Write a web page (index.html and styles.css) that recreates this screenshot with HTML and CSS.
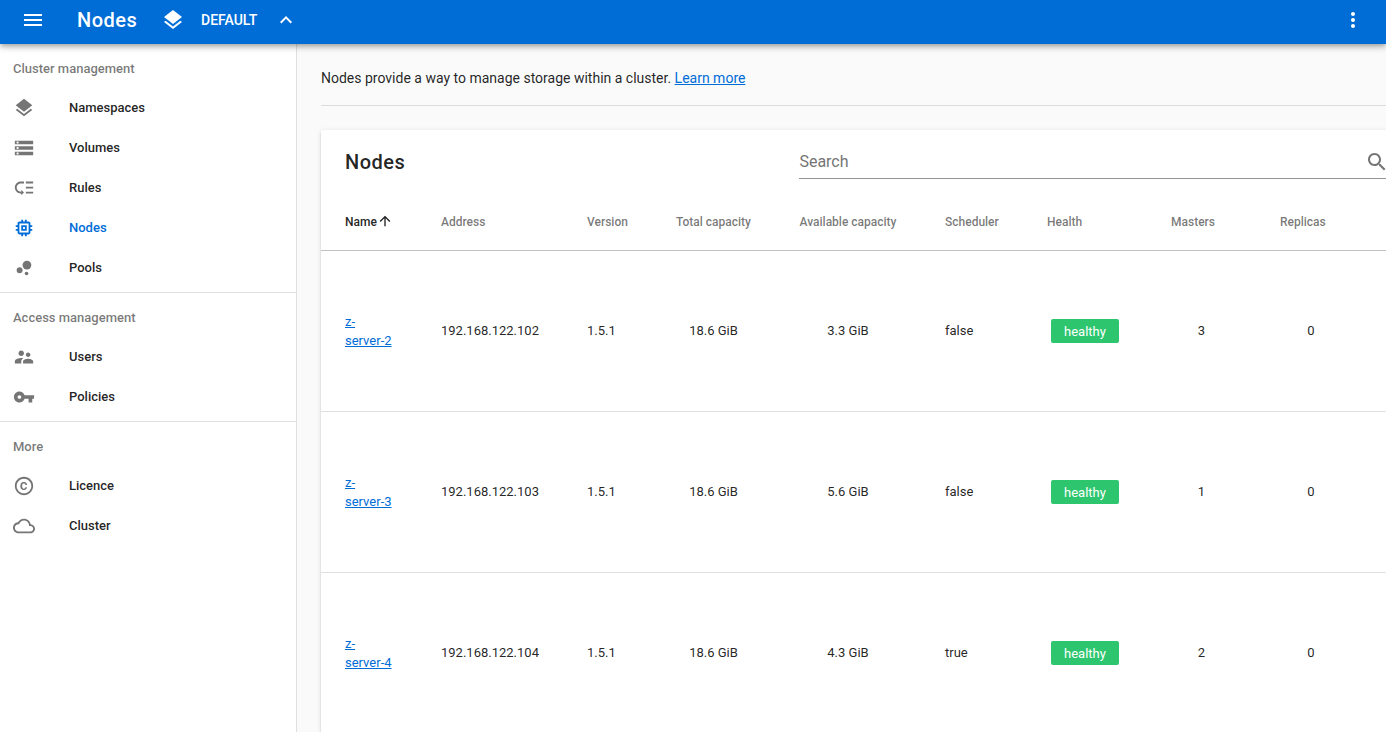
FILE: index.html
```html
<!DOCTYPE html>
<html lang="en">
<head>
<meta charset="utf-8">
<title>Nodes</title>
<link rel="stylesheet" href="styles.css">
</head>
<body>
<header class="toolbar">
  <svg class="icon menu" viewBox="0 0 24 24"><path d="M3 18h18v-2H3v2zm0-5h18v-2H3v2zm0-7v2h18V6H3z"/></svg>
  <h1 class="toolbar-title">Nodes</h1>
  <svg class="icon" viewBox="0 0 24 24"><path d="M11.99 18.54l-7.37-5.73L3 14.07l9 7 9-7-1.63-1.27-7.38 5.74zM12 16l7.36-5.73L21 9l-9-7-9 7 1.63 1.27L12 16z"/></svg>
  <span class="namespace">DEFAULT</span>
  <svg class="icon" viewBox="0 0 24 24"><path d="M12 8l-6 6 1.41 1.41L12 10.83l4.59 4.58L18 14z"/></svg>
  <svg class="icon more" viewBox="0 0 24 24"><path d="M12 8c1.1 0 2-.9 2-2s-.9-2-2-2-2 .9-2 2 .9 2 2 2zm0 2c-1.1 0-2 .9-2 2s.9 2 2 2 2-.9 2-2-.9-2-2-2zm0 6c-1.1 0-2 .9-2 2s.9 2 2 2 2-.9 2-2-.9-2-2-2z"/></svg>
</header>
<div class="layout">
  <nav class="sidebar">
    <section class="group">
      <h2 class="subheader">Cluster management</h2>
      <a class="item"><svg class="nav-icon" viewBox="0 0 24 24"><path d="M11.99 18.54l-7.37-5.73L3 14.07l9 7 9-7-1.63-1.27-7.38 5.74zM12 16l7.36-5.73L21 9l-9-7-9 7 1.63 1.27L12 16z"/></svg><span class="label">Namespaces</span></a>
      <a class="item"><svg class="nav-icon" viewBox="0 0 24 24"><path d="M2 20h20v-4H2v4zm2-3h2v2H4v-2zM2 4v4h20V4H2zm4 3H4V5h2v2zm-4 7h20v-4H2v4zm2-3h2v2H4v-2z"/></svg><span class="label">Volumes</span></a>
      <a class="item"><svg class="nav-icon" viewBox="0 0 24 24"><path d="M14 5h8v2h-8zm0 5.5h8v2h-8zm0 5.5h8v2h-8zM2 11.5C2 15.08 4.92 18 8.5 18H9v2l3-3-3-3v2h-.5C6.02 16 4 13.98 4 11.5S6.02 7 8.5 7H12V5H8.5C4.92 5 2 7.92 2 11.5z"/></svg><span class="label">Rules</span></a>
      <a class="item active"><svg class="nav-icon" viewBox="0 0 24 24"><path d="M15 9H9v6h6V9zm-2 4h-2v-2h2v2zm8-2V9h-2V7c0-1.1-.9-2-2-2h-2V3h-2v2h-2V3H9v2H7c-1.1 0-2 .9-2 2v2H3v2h2v2H3v2h2v2c0 1.1.9 2 2 2h2v2h2v-2h2v2h2v-2h2c1.1 0 2-.9 2-2v-2h2v-2h-2v-2h2zm-4 6H7V7h10v10z"/></svg><span class="label">Nodes</span></a>
      <a class="item"><svg class="nav-icon" viewBox="0 0 24 24"><circle cx="7.2" cy="14.4" r="3.2"/><circle cx="14.8" cy="18" r="2"/><circle cx="15.2" cy="8.8" r="4.8"/></svg><span class="label">Pools</span></a>
    </section>
    <section class="group">
      <h2 class="subheader">Access management</h2>
      <a class="item"><svg class="nav-icon" viewBox="0 0 24 24"><path d="M16.5 12c1.38 0 2.49-1.12 2.49-2.5S17.88 7 16.5 7C15.12 7 14 8.12 14 9.5s1.12 2.5 2.5 2.5zM9 11c1.66 0 2.99-1.34 2.99-3S10.66 5 9 5C7.34 5 6 6.34 6 8s1.34 3 3 3zm7.5 3c-1.83 0-5.5.92-5.5 2.75V19h11v-2.25c0-1.83-3.67-2.75-5.5-2.75zM9 13c-2.33 0-7 1.17-7 3.5V19h7v-2.25c0-.85.33-2.34 2.37-3.47C10.5 13.1 9.66 13 9 13z"/></svg><span class="label">Users</span></a>
      <a class="item"><svg class="nav-icon" viewBox="0 0 24 24"><path d="M12.65 10C11.83 7.67 9.61 6 7 6c-3.31 0-6 2.69-6 6s2.69 6 6 6c2.61 0 4.83-1.67 5.65-4H17v4h4v-4h2v-4H12.65zM7 14c-1.1 0-2-.9-2-2s.9-2 2-2 2 .9 2 2-.9 2-2 2z"/></svg><span class="label">Policies</span></a>
    </section>
    <section class="group">
      <h2 class="subheader">More</h2>
      <a class="item"><svg class="nav-icon" viewBox="0 0 24 24"><path d="M10.08 10.86c.05-.33.16-.62.3-.87s.34-.46.59-.62c.24-.15.54-.22.91-.23.23.01.44.05.63.13.2.09.38.21.52.36s.25.33.34.53.13.42.14.64h1.79c-.02-.47-.11-.9-.28-1.29s-.4-.73-.7-1.01-.66-.5-1.08-.66-.88-.23-1.39-.23c-.65 0-1.22.11-1.7.34s-.88.53-1.2.92-.56.84-.71 1.36S8 11.29 8 11.87v.27c0 .58.08 1.12.23 1.64s.39.97.71 1.35.72.69 1.2.91 1.05.34 1.7.34c.47 0 .91-.08 1.32-.23s.77-.36 1.08-.63.56-.58.74-.94.29-.74.3-1.15h-1.79c-.01.21-.06.4-.15.58s-.21.33-.36.46-.32.23-.52.3c-.19.07-.39.09-.6.1-.36-.01-.66-.08-.89-.23-.25-.16-.45-.37-.59-.62s-.25-.55-.3-.88-.08-.67-.08-1v-.27c0-.35.03-.68.08-1.01zM12 2C6.48 2 2 6.48 2 12s4.48 10 10 10 10-4.48 10-10S17.52 2 12 2zm0 18c-4.41 0-8-3.59-8-8s3.59-8 8-8 8 3.59 8 8-3.59 8-8 8z"/></svg><span class="label">Licence</span></a>
      <a class="item"><svg class="nav-icon" viewBox="0 0 24 24"><path d="M19.35 10.04C18.67 6.59 15.64 4 12 4 9.11 4 6.6 5.64 5.35 8.04 2.34 8.36 0 10.91 0 14c0 3.31 2.69 6 6 6h13c2.76 0 5-2.24 5-5 0-2.64-2.05-4.78-4.65-4.96zM19 18H6c-2.21 0-4-1.79-4-4s1.79-4 4-4h.71C7.37 7.69 9.48 6 12 6c3.04 0 5.5 2.46 5.5 5.5v.5H19c1.66 0 3 1.34 3 3s-1.34 3-3 3z"/></svg><span class="label">Cluster</span></a>
    </section>
  </nav>
  <main class="content">
    <p class="intro">Nodes provide a way to manage storage within a cluster. <a class="link">Learn more</a></p>
    <div class="card">
      <div class="card-head">
        <h2 class="card-title">Nodes</h2>
        <div class="search"><span class="placeholder">Search</span><svg class="icon" viewBox="0 0 24 24"><path d="M15.5 14h-.79l-.28-.27C15.41 12.59 16 11.11 16 9.5 16 5.91 13.09 3 9.5 3S3 5.91 3 9.5 5.91 16 9.5 16c1.61 0 3.09-.59 4.23-1.57l.27.28v.79l5 4.99L20.49 19l-4.99-5zm-6 0C7.01 14 5 11.99 5 9.5S7.01 5 9.5 5 14 7.01 14 9.5 11.99 14 9.5 14z"/></svg></div>
      </div>
      <table class="nodes">
        <colgroup><col class="c-name"><col class="c-address"><col class="c-version"><col class="c-total"><col class="c-available"><col class="c-scheduler"><col class="c-health"><col class="c-masters"><col class="c-replicas"><col></colgroup>
        <thead>
          <tr><th class="sorted">Name<svg class="sort" viewBox="0 0 24 24"><path d="M4 12l1.41 1.41L11 7.83V20h2V7.83l5.58 5.59L20 12l-8-8-8 8z"/></svg></th><th>Address</th><th>Version</th><th class="center">Total capacity</th><th class="center">Available capacity</th><th>Scheduler</th><th>Health</th><th>Masters</th><th>Replicas</th><th></th></tr>
        </thead>
        <tbody>
          <tr><td class="name"><a class="link">z-<br>server-2</a></td><td>192.168.122.102</td><td>1.5.1</td><td class="center">18.6 GiB</td><td class="center">3.3 GiB</td><td>false</td><td class="health"><span class="chip">healthy</span></td><td class="center">3</td><td class="center">0</td><td></td></tr>
          <tr><td class="name"><a class="link">z-<br>server-3</a></td><td>192.168.122.103</td><td>1.5.1</td><td class="center">18.6 GiB</td><td class="center">5.6 GiB</td><td>false</td><td class="health"><span class="chip">healthy</span></td><td class="center">1</td><td class="center">0</td><td></td></tr>
          <tr><td class="name"><a class="link">z-<br>server-4</a></td><td>192.168.122.104</td><td>1.5.1</td><td class="center">18.6 GiB</td><td class="center">4.3 GiB</td><td>true</td><td class="health"><span class="chip">healthy</span></td><td class="center">2</td><td class="center">0</td><td></td></tr>
        </tbody>
      </table>
    </div>
  </main>
</div>
</body>
</html>
```

FILE: styles.css
```css
* { box-sizing: border-box; }

body {
  margin: 0;
  height: 732px;
  overflow: hidden;
  display: flex;
  flex-direction: column;
  background: #fafafa;
  color: rgba(0, 0, 0, .87);
  font-family: Roboto, "Liberation Sans", sans-serif;
}

h1, h2, p { margin: 0; }
svg { fill: currentColor; flex: none; }
.icon { width: 24px; height: 24px; }

.toolbar {
  position: relative;
  z-index: 2;
  flex: none;
  height: 44px;
  padding: 0 21px 4px;
  display: flex;
  align-items: center;
  background: #006dd7;
  color: #fff;
  box-shadow: 0 2px 4px -1px rgba(0, 0, 0, .2), 0 4px 5px rgba(0, 0, 0, .14), 0 1px 10px rgba(0, 0, 0, .12);
}
.toolbar-title {
  width: 84px;
  margin-left: 32px;
  font-size: 20px;
  font-weight: 500;
  letter-spacing: .5px;
}
.namespace {
  width: 57px;
  margin: 0 15.5px 0 16px;
  font-size: 14px;
  font-weight: 500;
}
.more { margin-left: auto; }

.layout { flex: 1; min-height: 0; display: flex; overflow: hidden; }

.sidebar {
  flex: none;
  width: 297px;
  background: #fff;
  border-right: 1px solid #dfdfdf;
  font-size: 13px;
  font-weight: 500;
}
.group { padding: 4px 0; }
.group + .group { border-top: 1px solid #e0e0e0; }
.subheader {
  height: 40px;
  padding-left: 13px;
  font-size: 13px;
  font-weight: 500;
  line-height: 41px;
  color: rgba(0, 0, 0, .54);
}
.item {
  height: 40px;
  padding-left: 13px;
  display: flex;
  align-items: center;
  gap: 34px;
}
.label { padding-bottom: 2px; }
.nav-icon { width: 22px; height: 22px; color: #757575; }
.active, .active .nav-icon { color: #006dd7; }

.content { flex: none; width: 1120px; padding-left: 24px; }
.intro {
  height: 62px;
  padding-top: 24px;
  border-bottom: 1px solid #dcdcdc;
  font-size: 14px;
  line-height: 21px;
}
.link { color: #006dd7; text-decoration: underline; }

.card {
  margin-top: 24px;
  background: #fff;
  border-radius: 2px;
  box-shadow: 0 3px 1px -2px rgba(0, 0, 0, .2), 0 2px 2px rgba(0, 0, 0, .14), 0 1px 5px rgba(0, 0, 0, .12);
}
.card-head { height: 64px; display: flex; padding-left: 24px; }
.card-title {
  width: 454px;
  font-size: 20px;
  font-weight: 500;
  letter-spacing: .5px;
  line-height: 64px;
}
.search {
  width: 590px;
  height: 33px;
  margin-top: 16px;
  display: flex;
  justify-content: space-between;
  align-items: center;
  border-bottom: 1px solid #949494;
  color: #757575;
  font-size: 16px;
}
.placeholder { padding: 0 0 2px .4px; }

.nodes {
  width: 1120px;
  table-layout: fixed;
  border-collapse: separate;
  border-spacing: 0;
  font-size: 13px;
}
.c-name { width: 96px; }
.c-address { width: 146px; }
.c-version { width: 89px; }
.c-total { width: 123px; }
.c-available { width: 146px; }
.c-scheduler { width: 102px; }
.c-health { width: 124px; }
.c-masters { width: 109px; }
.c-replicas { width: 110px; }
.nodes th, .nodes td { padding: 0 0 0 24px; text-align: left; white-space: nowrap; }
.nodes th {
  height: 57px;
  border-bottom: 1px solid #c1c1c1;
  font-size: 12px;
  font-weight: 500;
  line-height: 16px;
  color: rgba(0, 0, 0, .54);
}
.nodes th.sorted { color: rgba(0, 0, 0, .87); }
.nodes td {
  height: 161px;
  padding-bottom: 2px;
  border-bottom: 1px solid #e0e0e0;
  line-height: 19px;
}
.nodes td.name, .nodes td.health { padding-bottom: 0; }
.nodes .center { padding-left: 0; text-align: center; }
.sort { width: 16px; height: 16px; margin-top: -1px; vertical-align: top; }
.chip {
  display: inline-flex;
  align-items: center;
  justify-content: center;
  width: 68px;
  height: 24px;
  margin-left: 4px;
  border-radius: 2px;
  background: #2dc66f;
  color: #fff;
  vertical-align: middle;
}
```
